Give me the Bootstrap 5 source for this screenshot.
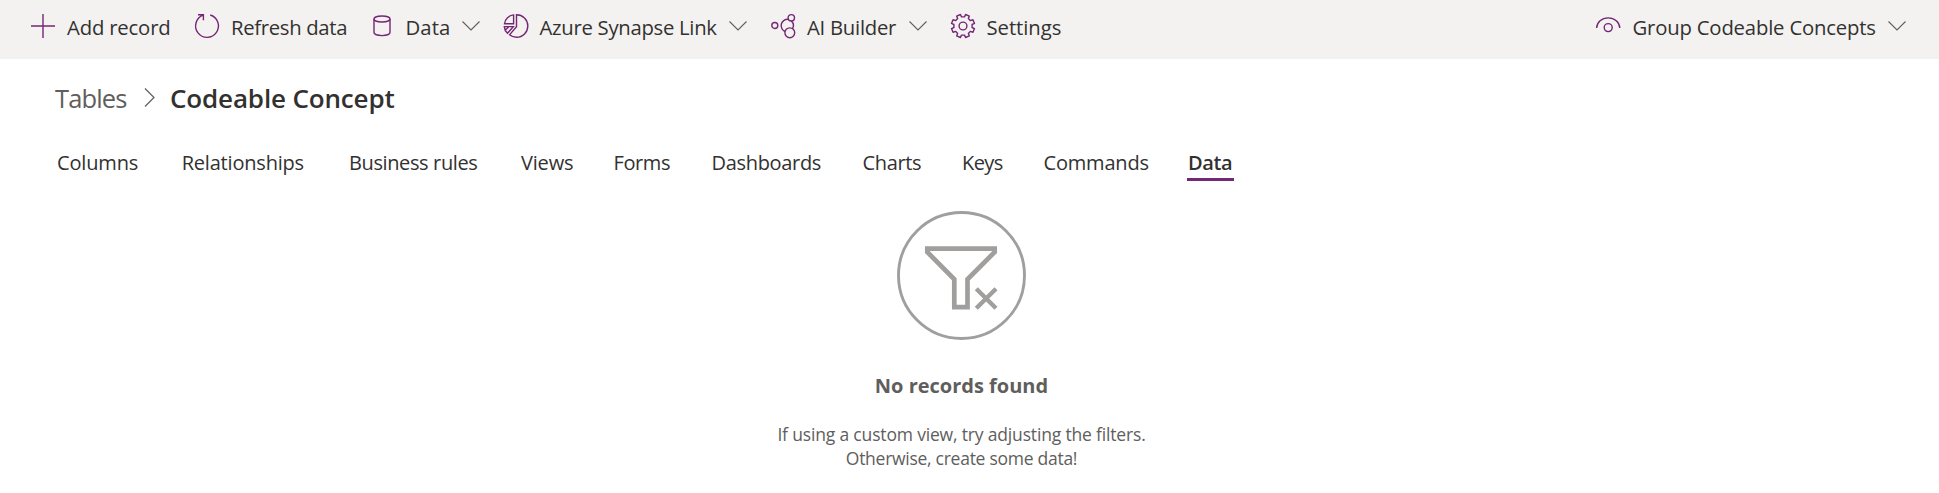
<!DOCTYPE html>
<html lang="en">
<head>
<meta charset="utf-8">
<title>Codeable Concept</title>
<link rel="stylesheet" href="https://cdn.jsdelivr.net/npm/bootstrap@5.3.0/dist/css/bootstrap.min.css">
<style>
body{font-family:"Open Sans","Noto Sans",sans-serif;color:#323130;background:#fff;overflow:hidden}
svg{display:block;flex:none;fill:none}
.cmdbar{height:59px;background:#f3f2f1;padding:0 33px 5px 31px}
.cmd{font-size:20.3px;line-height:28px;color:#323130;white-space:nowrap;flex:none;background:none;border:0;padding:0}
.cmd .ico{width:24px;height:24px;margin:-2px 12px 0 0;stroke:#742774;stroke-width:1.4;overflow:visible}
.chev{width:18px;height:10px;stroke:#605e5c;stroke-width:1.1;margin-top:-3px}
.c-add{width:164px;letter-spacing:-.17px}
.c-refresh{width:174.5px;letter-spacing:-.32px}
.c-data{width:134px;padding-right:24px;letter-spacing:.1px}
.c-link{width:267.5px;padding-right:24px;letter-spacing:-.28px}
.c-ai{width:179.5px;padding-right:24px;letter-spacing:-.25px}
.c-set{letter-spacing:-.05px}
.c-view{width:310.5px;letter-spacing:-.18px}
.c-view .ico{margin-right:13px}
.crumbs{padding:21px 0 0 55px;font-size:26px;line-height:36px;white-space:nowrap}
.crumb-up{width:90px;color:#605e5c;font-size:25.5px;letter-spacing:-.85px}
.crumb-sep{width:11px;height:19px;margin:-1px 15px 0 -1px;stroke:#605e5c;stroke-width:1.2}
.crumb-here{font-weight:600;letter-spacing:-.15px}
.tabs{margin-top:32px;padding-left:57px;height:33px;font-size:20px;line-height:30px}
.tabs a{color:#323130;text-decoration:none;white-space:nowrap;flex:none}
.t-col{width:124.7px;letter-spacing:-.15px}
.t-rel{width:167.3px;letter-spacing:-.2px}
.t-bus{width:172px;letter-spacing:-.38px}
.t-view{width:92.5px;letter-spacing:-.18px}
.t-form{width:98px;letter-spacing:-.4px}
.t-dash{width:151px;letter-spacing:-.32px}
.t-chart{width:99.5px;letter-spacing:-.36px}
.t-key{width:81.5px;letter-spacing:-.55px}
.t-cmd{width:143.5px;letter-spacing:-.19px}
.t-data{width:47px;padding-left:1px;height:33px;font-weight:600;letter-spacing:-.4px;border-bottom:3px solid #742774}
.blank{padding:30px 16px 0 0;color:#605e5c}
.blank h2{font-size:20px;line-height:28px;font-weight:700;margin:32px 0 22px}
.blank p{font-size:17.5px;line-height:24px;margin:0}
.ln1{letter-spacing:-.17px}.ln2{letter-spacing:-.27px}
</style>
</head>
<body>
<header class="cmdbar d-flex align-items-center">
  <button class="cmd c-add d-flex align-items-center"><svg class="ico" viewBox="0 0 24 24"><path d="M12 0v24M0 12h24"/></svg>Add record</button>
  <button class="cmd c-refresh d-flex align-items-center"><svg class="ico" viewBox="0 0 24 24"><path d="M15.2 1A11.4 11.4 0 1 1 8.2 1.2M3 .7h5.4v5.5"/></svg>Refresh data</button>
  <button class="cmd c-data d-flex align-items-center"><svg class="ico" viewBox="0 0 24 24"><ellipse cx="12" cy="5" rx="8" ry="3"/><path d="M4 5v13.6c0 1.7 3.600 3 8 3s8-1.300 8-3V5"/></svg>Data<svg class="chev ms-auto" viewBox="0 0 18 10"><path d="M.5.5 9 9 17.500.5"/></svg></button>
  <button class="cmd c-link d-flex align-items-center"><svg class="ico" viewBox="0 0 24 24"><path d="M12.500.8C18.800.8 23.800 5.800 23.800 12s-5 11.300-11.300 11.300c-2.700 0-5.100-.9-7-2.500l7-8.100zM9.600.9V9.800H.5C1 5.100 4.900 1.300 9.600.9zM.3 12.600H9.300L3.500 19.200C1.600 17.500.4 15.200.3 12.600zM1.200 16.300l3.800-3.700"/></svg>Azure Synapse Link<svg class="chev ms-auto" viewBox="0 0 18 10"><path d="M.5.5 9 9 17.500.5"/></svg></button>
  <button class="cmd c-ai d-flex align-items-center"><svg class="ico" viewBox="0 0 24 24"><circle cx="3.800" cy="11.500" r="3"/><path d="M17.500 5.400A6.300 6.300 0 0 0 14.200 17.500M20.400 7A6.300 6.300 0 0 1 21.300 14.900"/><circle cx="20.300" cy="3.800" r="3.200"/><circle cx="18.800" cy="18.800" r="4.900"/></svg>AI Builder<svg class="chev ms-auto" viewBox="0 0 18 10"><path d="M.5.5 9 9 17.500.5"/></svg></button>
  <button class="cmd c-set d-flex align-items-center"><svg class="ico" viewBox="0 0 24 24"><path stroke-linejoin="round" d="M13.500 2.900 14.550.5 18.350 2.050 17.350 4.500 19.500 6.650 21.950 5.650 23.500 9.450 21.100 10.500V13.500L23.500 14.550 21.950 18.350 19.500 17.350 17.350 19.500 18.350 21.950 14.550 23.500 13.500 21.100H10.500L9.450 23.500 5.650 21.950 6.650 19.500 4.500 17.350 2.050 18.350.5 14.550 2.900 13.500V10.500L.5 9.450 2.050 5.650 4.500 6.650 6.650 4.500 5.650 2.050 9.450.5 10.500 2.900z"/><circle cx="12" cy="12" r="3.900"/></svg>Settings</button>
  <button class="cmd c-view d-flex align-items-center ms-auto"><svg class="ico" viewBox="0 0 24 24"><path d="M.6 14C.9 8 5.800 3.900 12.200 3.900S23.500 8 23.800 14"/><circle cx="12.200" cy="13.600" r="4"/></svg>Group Codeable Concepts<svg class="chev ms-auto" viewBox="0 0 18 10"><path d="M.5.5 9 9 17.500.5"/></svg></button>
</header>
<main>
  <nav class="crumbs d-flex align-items-center">
    <span class="crumb-up">Tables</span>
    <svg class="crumb-sep" viewBox="0 0 11 19"><path d="M1 .5 10 9.500 1 18.500"/></svg>
    <span class="crumb-here">Codeable Concept</span>
  </nav>
  <nav class="tabs d-flex">
    <a href="#" class="t-col">Columns</a>
    <a href="#" class="t-rel">Relationships</a>
    <a href="#" class="t-bus">Business rules</a>
    <a href="#" class="t-view">Views</a>
    <a href="#" class="t-form">Forms</a>
    <a href="#" class="t-dash">Dashboards</a>
    <a href="#" class="t-chart">Charts</a>
    <a href="#" class="t-key">Keys</a>
    <a href="#" class="t-cmd">Commands</a>
    <a href="#" class="t-data">Data</a>
  </nav>
  <section class="blank d-flex flex-column align-items-center text-center">
    <svg width="129" height="129" viewBox="0 0 129 129" stroke="#a19f9d"><circle cx="64.500" cy="64.500" r="63" stroke-width="2.900"/><path stroke-width="4.700" d="M30.300 37.600H97.700V41L70.500 68.300V96.100H57.300V68.300L30.300 41z"/><path stroke-width="4.400" d="M79.300 77.800 99 97.200M99 77.800 79.300 97.200"/></svg>
    <h2>No records found</h2>
    <p class="ln1">If using a custom view, try adjusting the filters.</p>
    <p class="ln2">Otherwise, create some data!</p>
  </section>
</main>
<script src="https://cdn.jsdelivr.net/npm/bootstrap@5.3.0/dist/js/bootstrap.bundle.min.js"></script>
</body>
</html>
